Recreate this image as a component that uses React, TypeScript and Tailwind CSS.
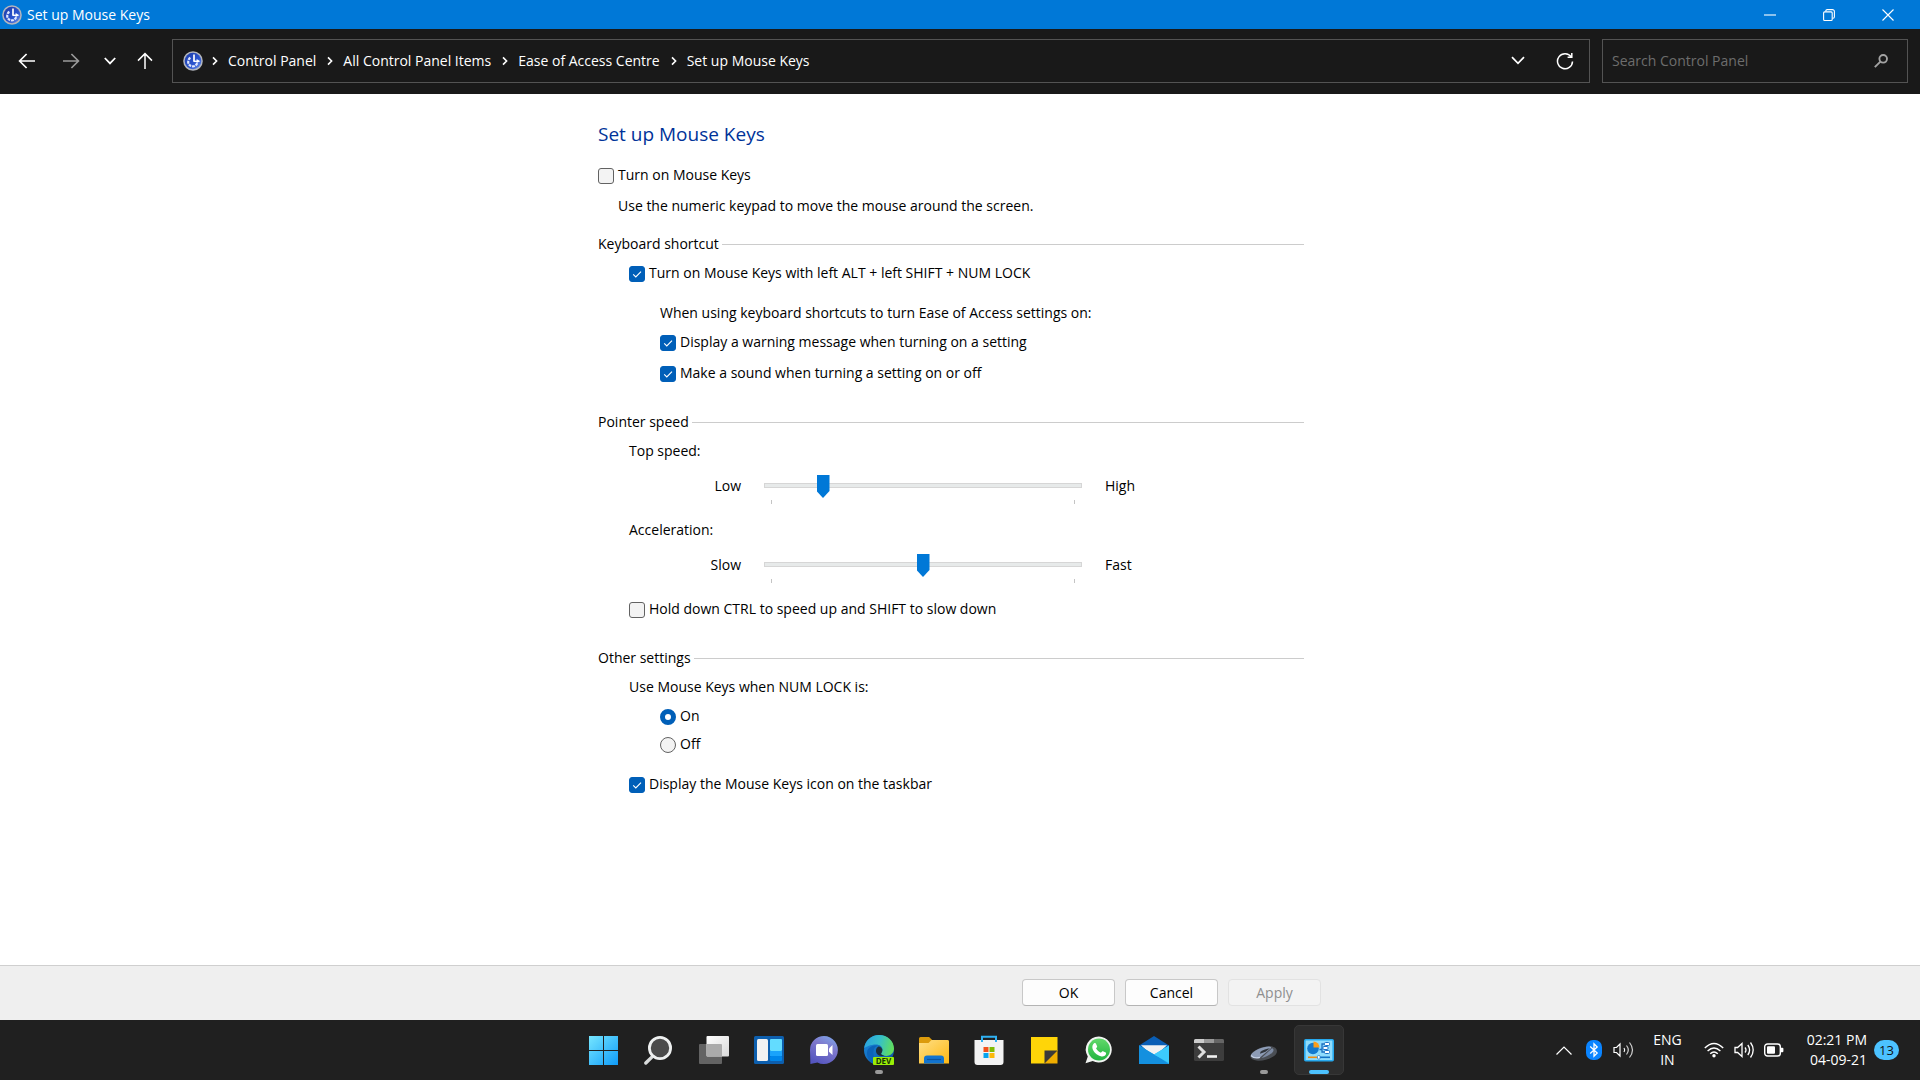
import React, { useId, useState } from "react";

/* ---------- shared glyphs ---------- */

function EaseIcon() {
  return (
    <svg viewBox="0 0 20 20" className="size-5 shrink-0" aria-hidden="true">
      <defs>
        <linearGradient id="easeBlue" x1="0" y1="0" x2="1" y2="1">
          <stop offset="0" stopColor="#1c3ba6" />
          <stop offset="0.6" stopColor="#2b55cf" />
          <stop offset="1" stopColor="#6d92ea" />
        </linearGradient>
      </defs>
      <circle cx="10" cy="10" r="9.8" fill="#b3b6be" />
      <circle cx="10" cy="10" r="8.3" fill="url(#easeBlue)" />
      <path d="M7.4 6.8A4.6 4.6 0 1 0 14.2 12" fill="none" stroke="#dfe7ff" strokeWidth="2.2" strokeDasharray="2.8 0.8" />
      <path d="M11 3.4v6.9" stroke="#fff" strokeWidth="1.7" />
      <path d="M10.4 10.3h4" stroke="#fff" strokeWidth="1.5" />
      <path d="M13.6 7.900 17.300 10.300 13.600 12z" fill="#fff" />
    </svg>
  );
}

function CrumbArrow() {
  return (
    <svg viewBox="0 0 6 10" className="h-2.5 w-1.5 shrink-0" fill="none" stroke="#fff" strokeWidth="1.6" aria-hidden="true">
      <path d="M1 1.4 4.6 5 1 8.6" />
    </svg>
  );
}

/* ---------- title bar ---------- */

function TitleBar() {
  const buttons = [
    { label: "Minimise", shape: <path d="M0 6h12" /> },
    {
      label: "Restore",
      shape: (
        <>
          <rect x="0.6" y="2.9" width="8.6" height="8.6" rx="1" />
          <path d="M2.8 2.6V2A1.4 1.4 0 0 1 4.2.6h5.2a2 2 0 0 1 2 2v5.2a1.4 1.4 0 0 1-1.4 1.4h-.6" />
        </>
      ),
    },
    { label: "Close", shape: <path d="M.5.5l11 11M11.5.5l-11 11" /> },
  ];
  return (
    <header className="flex h-[29px] items-center bg-[#0078d7] pl-0.5 text-white">
      <EaseIcon />
      <h1 className="flex-1 pl-[5px] text-[14px]">Set up Mouse Keys</h1>
      <div className="flex h-full pr-[3px]">
        {buttons.map((b) => (
          <button key={b.label} aria-label={b.label} className="flex w-[59px] items-center justify-center">
            <svg viewBox="0 0 12 12" className="size-3 overflow-visible" fill="none" stroke="currentColor" strokeWidth="1.1">
              {b.shape}
            </svg>
          </button>
        ))}
      </div>
    </header>
  );
}

/* ---------- navigation bar ---------- */

const crumbs = ["Control Panel", "All Control Panel Items", "Ease of Access Centre", "Set up Mouse Keys"];

function NavBar() {
  return (
    <nav className="flex h-[65px] items-center bg-[#191919] pr-3 pb-0.5 pl-[18px] text-white">
      <div className="flex w-[154px] shrink-0 items-center">
        <button aria-label="Back" className="mr-[26px]">
          <svg viewBox="0 0 18 18" className="size-[18px]" fill="none" stroke="#fff" strokeWidth="1.7">
            <path d="M17 9H1.6M8.6 2 1.6 9l7 7" />
          </svg>
        </button>
        <button aria-label="Forward" className="mr-6">
          <svg viewBox="0 0 18 18" className="size-[18px]" fill="none" stroke="#9a9a9a" strokeWidth="1.7">
            <path d="M1 9h15.4M9.4 2l7 7-7 7" />
          </svg>
        </button>
        <button aria-label="Recent locations" className="mr-[21px]">
          <svg viewBox="0 0 12 8" className="h-2 w-3" fill="none" stroke="#fff" strokeWidth="1.8">
            <path d="M.8 1 6 6.4 11.2 1" />
          </svg>
        </button>
        <button aria-label="Up">
          <svg viewBox="0 0 16 18" className="h-[18px] w-4" fill="none" stroke="#fff" strokeWidth="1.5">
            <path d="M8 17V1.800M1 8.600l7-7 7 7" />
          </svg>
        </button>
      </div>

      <div className="flex h-11 flex-1 items-center border border-[#535353] pr-[15px] pl-2.5">
        <EaseIcon />
        <ol className="flex flex-1 items-center pl-[9px] text-[14px]">
          {crumbs.map((c) => (
            <li key={c} className="flex items-center gap-2.5 pr-[11px]">
              <CrumbArrow />
              <a href="#">{c}</a>
            </li>
          ))}
        </ol>
        <button aria-label="Previous locations" className="mr-[31px]">
          <svg viewBox="0 0 14 9" className="h-[9px] w-3.5" fill="none" stroke="#fff" strokeWidth="1.7">
            <path d="M1 1.200 7 7.400l6-6.200" />
          </svg>
        </button>
        <button aria-label="Refresh">
          <svg viewBox="0 0 18 18" className="size-[18px]" fill="none" stroke="#fff" strokeWidth="1.5">
            <path d="M15.200 5A7.500 7.500 0 1 0 16.500 9.400" />
            <path d="M11.600 5.200h4.200V1" />
          </svg>
        </button>
      </div>

      <label className="ml-3 flex h-11 w-[306px] items-center border border-[#535353] pr-[19px] pl-[9px]">
        <input
          type="text"
          aria-label="Search Control Panel"
          placeholder="Search Control Panel"
          className="min-w-0 flex-1 bg-transparent text-[14px] outline-none placeholder:text-[#6d6d6d]"
        />
        <svg viewBox="0 0 14 14" className="size-3.5" fill="none" stroke="#a3a3a3" strokeWidth="1.900" aria-hidden="true">
          <circle cx="9.200" cy="4.800" r="3.800" />
          <path d="M6.400 7.600.800 13.200" />
        </svg>
      </label>
    </nav>
  );
}

/* ---------- form controls ---------- */

function Check({ label, on = false }: { label: string; on?: boolean }) {
  const [checked, setChecked] = useState(on);
  return (
    <label className="flex h-5 w-fit items-center gap-1">
      <span className="mt-0.5 grid">
        <input
          type="checkbox"
          checked={checked}
          onChange={(e) => setChecked(e.target.checked)}
          className="col-start-1 row-start-1 size-4 appearance-none rounded-[3px] border border-[#626262] bg-[#f3f3f3] checked:border-[#005fb8] checked:bg-[#005fb8]"
        />
        {checked && (
          <svg viewBox="0 0 16 16" className="pointer-events-none col-start-1 row-start-1 size-4" fill="none" stroke="#fff" strokeWidth="1.1">
            <path d="M4.2 8.4 6.8 11l5.2-5.4" />
          </svg>
        )}
      </span>
      {label}
    </label>
  );
}

function Radio({ label, name, on = false }: { label: string; name: string; on?: boolean }) {
  return (
    <label className="flex h-5 w-fit items-center gap-1">
      <input
        type="radio"
        name={name}
        defaultChecked={on}
        className="mt-0.5 size-4 appearance-none rounded-full border border-[#626262] bg-[#f3f3f3] checked:border-5 checked:border-[#005fb8] checked:bg-white"
      />
      {label}
    </label>
  );
}

function Speed({ title, low, high, value }: { title: string; low: string; high: string; value: number }) {
  const id = useId();
  return (
    <div>
      <label htmlFor={id} className="block">
        {title}
      </label>
      <div className="mt-[13px] flex items-start">
        <span className="w-28 pt-0.5 text-right">{low}</span>
        <div className="ml-[23px] w-[318px]">
          <input
            id={id}
            type="range"
            min={0}
            max={100}
            defaultValue={value}
            className="block h-[23px] w-full appearance-none bg-transparent [&::-webkit-slider-runnable-track]:h-[5px] [&::-webkit-slider-runnable-track]:border [&::-webkit-slider-runnable-track]:border-[#d6d6d6] [&::-webkit-slider-runnable-track]:bg-[#e7eaea] [&::-webkit-slider-thumb]:mt-[-9px] [&::-webkit-slider-thumb]:h-[23px] [&::-webkit-slider-thumb]:w-[13px] [&::-webkit-slider-thumb]:appearance-none [&::-webkit-slider-thumb]:bg-[#0078d7] [&::-webkit-slider-thumb]:[clip-path:polygon(0_0,100%_0,100%_70%,50%_100%,0_70%)]"
          />
          <div className="mx-[7px] mt-[3px] h-1 border-x border-[#c4c4c4]" />
        </div>
        <span className="pt-0.5 pl-[23px]">{high}</span>
      </div>
    </div>
  );
}

function Section({ title, children }: { title: string; children: React.ReactNode }) {
  return (
    <section>
      <h3 className="flex items-center gap-[3px]">
        {title}
        <span className="h-px flex-1 bg-[#cccccc]" />
      </h3>
      <div className="mt-[9px] pl-[31px]">{children}</div>
    </section>
  );
}

function Settings() {
  return (
    <div className="mx-auto w-full max-w-[724px] pt-[26px] pr-[18px] text-[14px] leading-5 text-black">
      <h2 className="text-[19px] leading-7 text-[#003399]">Set up Mouse Keys</h2>
      <div className="mt-[17px]">
        <Check label="Turn on Mouse Keys" />
      </div>
      <p className="mt-[11px] pl-5">Use the numeric keypad to move the mouse around the screen.</p>

      <div className="mt-[18px] space-y-[29px]">
        <Section title="Keyboard shortcut">
          <Check label="Turn on Mouse Keys with left ALT + left SHIFT + NUM LOCK" on />
          <div className="mt-5 pl-[31px]">
            <p className="mb-[9px]">When using keyboard shortcuts to turn Ease of Access settings on:</p>
            <Check label="Display a warning message when turning on a setting" on />
            <div className="mt-[11px]">
              <Check label="Make a sound when turning a setting on or off" on />
            </div>
          </div>
        </Section>

        <Section title="Pointer speed">
          <div className="space-y-4">
            <Speed title="Top speed:" low="Low" high="High" value={17} />
            <Speed title="Acceleration:" low="Slow" high="Fast" value={50} />
            <Check label="Hold down CTRL to speed up and SHIFT to slow down" />
          </div>
        </Section>

        <Section title="Other settings">
          <fieldset>
            <legend>Use Mouse Keys when NUM LOCK is:</legend>
            <div className="mt-[9px] space-y-2 pl-[31px]">
              <Radio name="numlock" label="On" on />
              <Radio name="numlock" label="Off" />
            </div>
          </fieldset>
          <div className="mt-5">
            <Check label="Display the Mouse Keys icon on the taskbar" on />
          </div>
        </Section>
      </div>
    </div>
  );
}

function Footer() {
  const base = "h-[27px] w-[93px] rounded-[4px] border text-[14px] leading-5 ";
  return (
    <footer className="border-t border-[#cfcfcf] bg-[#efefef] px-4 pt-[13px] pb-3.5">
      <div className="mx-auto flex max-w-[724px] justify-end gap-2.5 pr-px">
        <button className={base + "border-[#c8c8c8] border-b-[#b4b4b4] bg-[#fdfdfd] text-black"}>OK</button>
        <button className={base + "border-[#c8c8c8] border-b-[#b4b4b4] bg-[#fdfdfd] text-black"}>Cancel</button>
        <button disabled className={base + "border-[#e2e2e2] bg-[#f3f3f3] text-[#8f8f8f]"}>
          Apply
        </button>
      </div>
    </footer>
  );
}

/* ---------- taskbar ---------- */

type App = { label: string; state?: "open" | "active"; art: React.ReactNode };

const apps: App[] = [
  {
    label: "Start",
    art: (
      <>
        <defs>
          <linearGradient id="start" x1="0" y1="0" x2="1" y2="1">
            <stop offset="0" stopColor="#76e6ff" />
            <stop offset="1" stopColor="#0f9bf8" />
          </linearGradient>
        </defs>
        <path d="M0 1h14v14H0zM15 1h14v14H15zM0 16h14v14H0zM15 16h14v14H15z" fill="url(#start)" />
      </>
    ),
  },
  {
    label: "Search",
    art: (
      <>
        <path d="M8.600 21.400 1.800 28" stroke="#d9dcdc" strokeWidth="3.400" strokeLinecap="round" />
        <circle cx="16" cy="13" r="10.600" fill="#4b4b4b" stroke="#eef0f0" strokeWidth="2.800" />
      </>
    ),
  },
  {
    label: "Task view",
    art: (
      <>
        <defs>
          <linearGradient id="tv" x1="0" y1="0" x2="1" y2="1">
            <stop offset="0" stopColor="#fff" />
            <stop offset="1" stopColor="#d9d9d9" />
          </linearGradient>
        </defs>
        <rect x="0" y="9" width="23" height="20" rx="1" fill="#636363" />
        <rect x="7.500" y="1" width="22.500" height="20.500" rx="1" fill="url(#tv)" />
        <path d="M7.500 9H22a1 1 0 0 1 1 1v11.500H8.500a1 1 0 0 1-1-1z" fill="#ababab" />
      </>
    ),
  },
  {
    label: "Widgets",
    art: (
      <>
        <rect x="0" y="1" width="30" height="28" rx="1.500" fill="#0d5fae" />
        <rect x="3" y="4" width="11" height="22" rx="1.500" fill="#f2f2f2" />
        <rect x="16" y="4" width="12" height="12" rx="1" fill="#63dcff" />
        <rect x="16" y="16" width="12" height="5" fill="#1aa3fb" />
        <rect x="16" y="21" width="12" height="5" rx="1" fill="#0086ea" />
      </>
    ),
  },
  {
    label: "Chat",
    art: (
      <>
        <defs>
          <linearGradient id="chat" x1="0.800" y1="0" x2="0.300" y2="1">
            <stop offset="0" stopColor="#7da4e8" />
            <stop offset="0.400" stopColor="#7f78cc" />
            <stop offset="1" stopColor="#5455bf" />
          </linearGradient>
        </defs>
        <path d="M15 1a14 14 0 1 1-6.600 26.400L1.400 29 1 15A14 14 0 0 1 15 1z" fill="url(#chat)" />
        <rect x="7" y="9" width="12" height="12" rx="1.500" fill="#fff" />
        <path d="M20 13.500 23.500 10v10L20 16.800z" fill="#fff" />
      </>
    ),
  },
  {
    label: "Edge Dev",
    state: "open",
    art: (
      <>
        <defs>
          <linearGradient id="edgeTop" x1="0" y1="0.300" x2="1" y2="0.500">
            <stop offset="0" stopColor="#2aa2e0" />
            <stop offset="0.500" stopColor="#36c0c8" />
            <stop offset="1" stopColor="#62df59" />
          </linearGradient>
          <linearGradient id="edgeLow" x1="0" y1="0" x2="1" y2="1">
            <stop offset="0" stopColor="#1b8de0" />
            <stop offset="1" stopColor="#0b4f9f" />
          </linearGradient>
        </defs>
        <circle cx="15" cy="15" r="15" fill="url(#edgeLow)" />
        <path d="M.2 13C1.200 5.500 7.400 0 15 0c8.600 0 15 6.200 15 13.600 0 4.400-3.300 7.400-7.600 7.400-3.200 0-5.300-1.300-5.300-2.400 0-.8 1.400-1.600 1.400-4 0-2.800-2.800-5-6.600-5-5.400 0-9.800 2.400-11.700 3.400z" fill="url(#edgeTop)" />
        <path d="M10 14c-2 6 1 12 7 15.600L10 29C4 26 2 20 3.500 15c2-4 7-5 10-4.500C11.800 11.500 10.600 12.500 10 14z" fill="#0c63b9" />
        <path d="M14.500 11.500c-3 1.500-3.300 5.500-1 8 1.800 1.600 5 1.900 7 1.400-2.500-.5-3.600-1.500-3.400-2.300.8-1 1.500-2.500 1.200-4-.4-1.800-2-3.200-3.800-3.100z" fill="#1d2f3c" />
        <rect x="9" y="22" width="21" height="8" rx="1" fill="#9bef06" />
        <text x="19.500" y="29" textAnchor="middle" fontSize="8" fontWeight="700" fill="#16310a">
          DEV
        </text>
      </>
    ),
  },
  {
    label: "File Explorer",
    art: (
      <>
        <defs>
          <linearGradient id="folder" x1="0" y1="0" x2="1" y2="1">
            <stop offset="0" stopColor="#ffdf86" />
            <stop offset="1" stopColor="#fdb813" />
          </linearGradient>
        </defs>
        <path d="M0 3.500A1.500 1.500 0 0 1 1.500 2h8.600l3 3H28a2 2 0 0 1 2 2v4H0z" fill="#dc9b0c" />
        <path d="M0 8h9.500l3-3H28.500A1.500 1.500 0 0 1 30 6.500v22H0z" fill="url(#folder)" />
        <path d="M5 28.500v-5a3 3 0 0 1 3-3h14a3 3 0 0 1 3 3v5z" fill="#1274cf" />
        <path d="M8 24.500h14" stroke="#0b549f" strokeWidth="1.200" />
      </>
    ),
  },
  {
    label: "Microsoft Store",
    art: (
      <>
        <path d="M.5 5h29v22a3 3 0 0 1-3 3h-23a3 3 0 0 1-3-3z" fill="#f3f3f3" />
        <path d="M8 7V1.800h14V7" fill="none" stroke="#2fb1f2" strokeWidth="2" />
        <path d="M9.500 12h5v5h-5z" fill="#f1511b" />
        <path d="M15.500 12h5v5h-5z" fill="#80bb03" />
        <path d="M9.500 18h5v5h-5z" fill="#07a4ef" />
        <path d="M15.500 18h5v5h-5z" fill="#fbb90a" />
      </>
    ),
  },
  {
    label: "Sticky Notes",
    art: (
      <>
        <path d="M2 2h26.500v13.500L15.500 28.500H2z" fill="#ffd508" />
        <path d="M28.500 15v13.500H15z" fill="#f0ad00" />
        <path d="M15.500 15.500h13l-13 13z" fill="#3c3a38" />
      </>
    ),
  },
  {
    label: "WhatsApp",
    art: (
      <>
        <defs>
          <linearGradient id="wa" x1="0" y1="0" x2="0" y2="1">
            <stop offset="0" stopColor="#62d96b" />
            <stop offset="1" stopColor="#22b43f" />
          </linearGradient>
        </defs>
        <path d="M15 1.500A13 13 0 1 1 8.700 26L1.500 28.300 3.800 21.400A13 13 0 0 1 15 1.500z" fill="#f1f4f1" />
        <circle cx="15" cy="14.500" r="11" fill="url(#wa)" />
        <path d="M10.100 8.300c.6-.6 1.500-.5 1.800.2l1.200 2.700c.2.500-.1 1-1.100 2.100 1.200 2.200 2.800 3.500 5 4.400.9-1.100 1.300-1.700 2-1.400l2.700 1.300c.6.300.5 1.300 0 2.200-1 1.600-3 2-4.900 1.500-4-1.100-7.400-4.500-8.300-7.800-.5-2 .2-3.900 1.600-5.200z" fill="#fff" />
      </>
    ),
  },
  {
    label: "Mail",
    art: (
      <>
        <path d="M0 10.500 15 1l15 9.500v4H0z" fill="#0a5eb5" />
        <path d="M2 10.200h26L15 22z" fill="#f2f2f2" />
        <path d="M0 10.500 15 19.500 30 10.500V29H0z" fill="#28b4f2" />
        <path d="M0 10.500 22 23.500 30 29H0z" fill="#1490df" />
        <path d="M30 10.500 15 19.500 30 28z" fill="#3ccbfd" />
      </>
    ),
  },
  {
    label: "Terminal",
    art: (
      <>
        <rect x="0" y="4" width="30" height="22" rx="1.500" fill="#3d3d3d" />
        <path d="M0 8V5.500A1.500 1.500 0 0 1 1.500 4H10v4z" fill="#cccccc" />
        <path d="M10 4h10v4H10z" fill="#999999" />
        <path d="M20 4h8.500A1.500 1.500 0 0 1 30 5.500V8H20z" fill="#666666" />
        <path d="M4.500 11.500 10 17l-5.500 5.500" fill="none" stroke="#dedede" strokeWidth="3" />
        <path d="M13 21.500h10" stroke="#f2f2f2" strokeWidth="2.600" />
      </>
    ),
  },
  {
    label: "Mouse settings",
    state: "open",
    art: (
      <>
        <path d="M1.500 21C3 15 14 11 21 11.200c5 .1 7.600 2.800 6.800 6.300C26.500 22.500 14 27 7.500 25.500 4 25 1 23.500 1.500 21z" fill="#4a4e54" />
        <path d="M1.800 20C4.500 15 14 11.300 20 11.400c2 0 2.600.8 1.600 2L11 22.600c-3 1-8.500.6-9.200-2.600z" fill="#8d9cb6" />
        <path d="M12.500 23 23 13.200c1.800.7 2 2.500.6 4-2.600 2.800-7 5-11.100 5.800z" fill="#7c8aa3" />
        <path d="M11.500 16.800c2.500-1.800 6-3.400 9.500-3.600l-4.500 3.500-5.500 2z" fill="#30353b" />
        <path d="M2 20.500c2 2.400 6 2.700 9 1.900" fill="none" stroke="#c3cfe4" strokeWidth="1.200" />
      </>
    ),
  },
  {
    label: "Control Panel",
    state: "active",
    art: (
      <>
        <rect x="0.800" y="4.800" width="28.400" height="20.900" rx="1" fill="#8fdcfc" stroke="#27a9ee" strokeWidth="1.600" />
        <circle cx="9" cy="13.500" r="5.800" fill="#1379cf" />
        <path d="M9.500 12.500V6.500a6 6 0 0 1 6 6z" fill="#fa9d1b" />
        <path d="M15.500 14.500h2.500V9H21M18 14v3h3" fill="none" stroke="#1d6fc0" strokeWidth="1.300" />
        <rect x="20.500" y="7.500" width="5" height="3" rx="1" fill="#fff" stroke="#1b72c6" />
        <rect x="20.500" y="15.500" width="5" height="3" rx="1" fill="#fff" stroke="#1b72c6" />
        <rect x="19" y="11.500" width="5" height="3" rx="1" fill="#fff" stroke="#1b72c6" />
        <path d="M4 22.300h9" stroke="#f08c12" strokeWidth="1.600" />
        <path d="M16 22.300h10" stroke="#1272c4" strokeWidth="1.600" />
        <rect x="13.500" y="20.500" width="2.600" height="3.600" rx="1" fill="#fff" stroke="#1b72c6" strokeWidth="0.700" />
      </>
    ),
  },
];

function AppButton({ label, state, art }: App) {
  return (
    <button
      aria-label={label}
      className={
        state === "active"
          ? "relative flex size-[50px] items-center justify-center rounded-[5px] border border-[#373737] bg-[#2d2d2d]"
          : "relative flex size-[50px] items-center justify-center"
      }
    >
      <svg viewBox="0 0 30 30" className="size-[30px] overflow-visible" fill="none">
        {art}
      </svg>
      {state === "open" && <span className="absolute bottom-px h-1 w-2 rounded-full bg-[#9a9a9a]" />}
      {state === "active" && <span className="absolute bottom-0 h-1 w-5 rounded-full bg-[#4cc2ff]" />}
    </button>
  );
}

function Tray() {
  return (
    <div className="flex items-center justify-end pr-[21px] text-[14px] leading-5 text-white">
      <button aria-label="Show hidden icons" className="mr-3.5">
        <svg viewBox="0 0 16 9" className="h-[9px] w-4" fill="none" stroke="#fff" strokeWidth="1.200">
          <path d="M.5 8.500 8 1l7.500 7.500" />
        </svg>
      </button>
      <button aria-label="Bluetooth" className="mr-[11px]">
        <svg viewBox="0 0 16 20" className="h-5 w-4" fill="none">
          <rect width="16" height="20" rx="7" fill="#0a84ff" />
          <path d="M4.200 6.500 11.200 13 8 16.200V3.800L11.200 7l-7 6.500" stroke="#fff" strokeWidth="1.300" />
        </svg>
      </button>
      <button aria-label="Speaker" className="mr-[19px]">
        <svg viewBox="0 0 21 20" className="h-5 w-[21px]" fill="none" stroke="#fff" strokeWidth="1.200">
          <path d="M1 7.500h2.500L7 4v12l-3.500-3.500H1z" />
          <path d="M11 8q1.400 2 0 4" />
          <path d="M13.500 5.500q3.600 4.500 0 9M16.500 2.500q6 7.500 0 15" stroke="#cfcfcf" />
        </svg>
      </button>
      <button className="mr-[22px] text-center">
        ENG
        <br />
        IN
      </button>
      <button aria-label="Network, volume and battery" className="mr-[23px] flex items-center gap-2.5">
        <svg viewBox="0 0 20 16" className="h-4 w-5" fill="none" stroke="#fff" strokeWidth="1.400">
          <path d="M.8 6q9.200-9 18.400 0M3.600 9q6.400-6 12.800 0M6.200 11.800q3.800-3.600 7.600 0" />
          <circle cx="10" cy="13.700" r="1.700" fill="#fff" stroke="none" />
        </svg>
        <svg viewBox="0 0 20 18" className="h-[18px] w-5" fill="none" stroke="#fff" strokeWidth="1.300">
          <path d="M1 6.500h2.600L8 2.500v13l-4.400-4H1z" />
          <path d="M11 6.500q2 2.500 0 5M13.800 4q3.600 5 0 10M16.500 1.500q5.400 7.500 0 15" />
        </svg>
        <svg viewBox="0 0 20 14" className="h-3.5 w-5" fill="none">
          <rect x="0.700" y="1" width="15.600" height="12" rx="2.800" stroke="#fff" strokeWidth="1.400" />
          <rect x="3" y="3.300" width="8" height="7.400" rx="1" fill="#fff" />
          <path d="M17 4.800h1.400a1 1 0 0 1 1 1v2.400a1 1 0 0 1-1 1H17z" fill="#fff" />
        </svg>
      </button>
      <button className="flex items-center gap-[7px] text-right">
        <span>
          02:21 PM
          <br />
          04-09-21
        </span>
        <span className="flex h-5 w-[25px] items-center justify-center rounded-full bg-[#4cc2ff] text-[13px] text-[#111]">
          13
        </span>
      </button>
    </div>
  );
}

function Taskbar() {
  return (
    <div className="grid h-[60px] grid-cols-[1fr_auto_1fr] items-center bg-[#202020]">
      <span />
      <div className="flex gap-[5px] pl-[3px]">
        {apps.map((a) => (
          <AppButton key={a.label} {...a} />
        ))}
      </div>
      <Tray />
    </div>
  );
}

export default function App() {
  return (
    <div className="flex min-h-screen flex-col bg-white font-['Open_Sans','Noto_Sans',sans-serif]">
      <TitleBar />
      <NavBar />
      <main className="flex-1">
        <Settings />
      </main>
      <Footer />
      <Taskbar />
    </div>
  );
}
